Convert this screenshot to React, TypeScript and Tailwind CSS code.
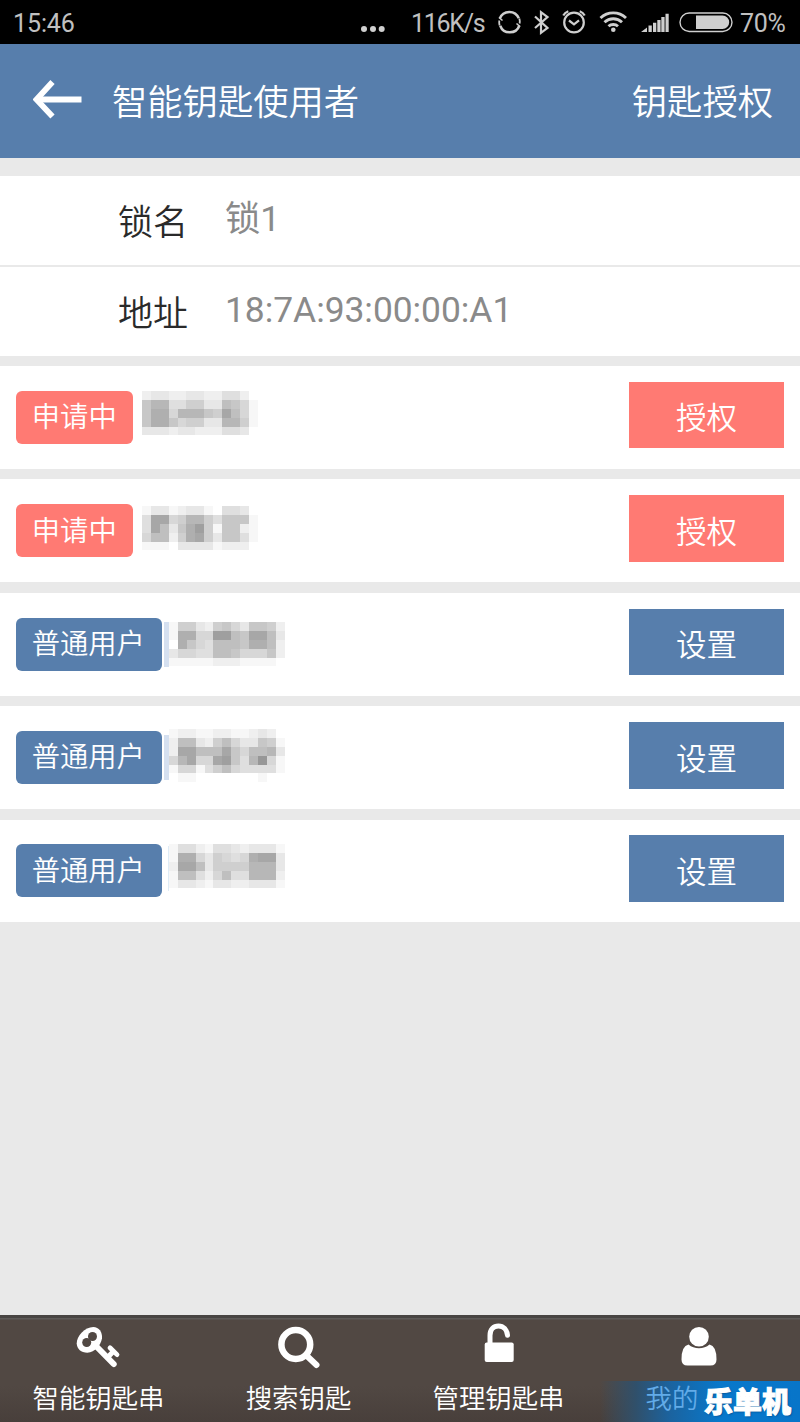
import type { ReactNode } from 'react';
import clsx from 'clsx';

/**
 * Key-user list of a smart lock: lock details on top, then everyone who holds
 * or has requested a key, with the action the owner can take on each.
 */

type Role = 'pending' | 'member';

interface KeyUser {
  role: Role;
  /** Masked name: one string per row of blocks, base-36 darkness per block. */
  mask: string[];
  top: number;
  edge?: 'wide' | 'thin';
}

const ROLE_LABEL: Record<Role, string> = { pending: '申请中', member: '普通用户' };
const ACTION_LABEL: Record<Role, string> = { pending: '授权', member: '设置' };
const TONE: Record<Role, string> = { pending: 'bg-[#ff7a73]', member: 'bg-[#577eac]' };

const USERS: KeyUser[] = [
  {
    role: 'pending',
    top: 24.8,
    mask: ['2332233224420', '7994466338751', '7aa599976b851', '7aa7566339961', '3332332224430'],
  },
  {
    role: 'pending',
    top: 27,
    mask: ['1331233104430', '4bb5699647771', '4b837ac617721', '58826ab637741', '1110333312220'],
  },
  {
    role: 'member',
    top: 29.2,
    edge: 'wide',
    mask: ['1663267537762', '1aa55cc87bb83', '0a7548887aa82', '3554488755572', '1111122211110'],
  },
  {
    role: 'member',
    top: 22.5,
    edge: 'wide',
    mask: ['1221122112320', '2883268533761', '2bb888b758893', '59b55bc749d51', '1551468544441', '0110000000100'],
  },
  {
    role: 'member',
    top: 24.6,
    edge: 'thin',
    mask: ['1442144323331', '1aa536545abb3', '2bb8366669993', '1884258449992', '1332133223331'],
  },
];

const CELL = 8.889;

function MaskedName({ rows }: { rows: string[] }) {
  return (
    <svg width={CELL * 13} height={CELL * rows.length} shapeRendering="crispEdges" className="block">
      {rows.map((row, y) =>
        row.split('').map((c, x) => {
          const v = 255 - parseInt(c, 36) * 8;
          return (
            <rect
              key={`${x}-${y}`}
              x={x * CELL}
              y={y * CELL}
              width={CELL}
              height={CELL}
              fill={`rgb(${v},${v},${v})`}
            />
          );
        }),
      )}
    </svg>
  );
}

function StatusBar() {
  return (
    <div className="flex h-[44px] shrink-0 items-center bg-black pt-[2px] text-[25px] leading-none text-[#c0c0c0]">
      <span className="ml-[13px] w-[346px] tracking-[-0.1px]">15:46</span>
      <svg width="28" height="44" fill="#d0d0d0" className="-mt-[2px]">
        <circle cx="5" cy="29" r="3" />
        <circle cx="14" cy="29" r="3" />
        <circle cx="22.7" cy="29" r="3" />
      </svg>
      <span className="ml-[24px] w-[86px] tracking-[-1.3px]">116K/s</span>
      <svg width="236" height="44" viewBox="497 0 236 44" fill="none" stroke="#cfcfcf" strokeWidth="2.2" className="-mt-[2px] shrink-0">
        {/* sync */}
        <path d="M499.800 18.500A10.200 10.200 0 0 1 518.800 18.300M519.400 25.500A10.200 10.200 0 0 1 500.200 25.700" strokeWidth="2.500" />
        <path d="M519.300 18.500q.8 2.500.3 5M499.700 25.500q-.8-2.500-.3-5" strokeWidth="1.800" />
        <path d="M516.500 23.500l3.500 3M502.500 20.500l-3.500-3" strokeWidth="1.600" />
        {/* bluetooth */}
        <path d="M535 16.500l12.500 11.500-6.500 4.800V12.200l6.500 4.800L535 28" strokeWidth="2.200" />
        {/* alarm */}
        <circle cx="574" cy="22.500" r="9.800" />
        <path d="M569 20.500l5 3.800 5-4" />
        <path d="M563.300 15.500q1.500-3 5-4.300M584.700 15.500q-1.500-3-5-4.300" />
        {/* wifi */}
        <path d="M600.500 18a18.500 18.500 0 0 1 25.500 0M604.500 22.300a12.700 12.700 0 0 1 17.500 0M608.500 26.300a7 7 0 0 1 9.500 0" strokeWidth="2.900" />
        <circle cx="613.300" cy="29.800" r="2.300" fill="#cfcfcf" stroke="none" />
        {/* signal */}
        <path
          d="M641 32l6-4.500V32zM648.500 25.500h3.300V32h-3.300zM653 22.700h3.300V32H653zM657.300 20h3.300v12h-3.300zM661.300 17h3.300v15h-3.300zM665.500 13.800h3.200V32h-3.200z"
          fill="#cfcfcf"
          stroke="none"
        />
        {/* battery */}
        <rect x="680" y="13" width="52" height="18.500" rx="9.200" strokeWidth="1.400" />
        <path d="M696 15.500h26.500a6.700 6.700 0 0 1 0 13.400H696z" fill="#cfcfcf" stroke="none" />
      </svg>
      <span className="ml-[7px] tracking-[-0.3px]">70%</span>
    </div>
  );
}

function Header() {
  return (
    <header className="flex h-[113.500px] shrink-0 items-center bg-[#577eac] pr-[27px] text-[35.300px] leading-none font-[350] text-white">
      <svg width="50" height="42" viewBox="0 0 50 42" fill="none" stroke="#fff" className="-mt-[2px] ml-[33px]">
        <path d="M3 20.500h45.500" strokeWidth="6" />
        <path d="M19.500 3L3.500 20.500l16 17" strokeWidth="5.800" />
      </svg>
      <h1 className="ml-[29px] flex-1 pt-[6px]">智能钥匙使用者</h1>
      <button type="button" className="pt-[6px] leading-none">
        钥匙授权
      </button>
    </header>
  );
}

function InfoRow({ label, value }: { label: string; value: string }) {
  return (
    <div className="flex h-[89px] items-center bg-white pt-[6px] pl-[118px] text-[35px] leading-none">
      <span className="w-[107px] font-[350] text-[#2a2a2a]">{label}</span>
      <span className="-mt-[7px] text-[35.400px] font-normal tracking-[-0.040px] text-[#8a8a8a]">{value}</span>
    </div>
  );
}

function UserRow({ user }: { user: KeyUser }) {
  const { role, edge } = user;
  return (
    <li className="flex h-[102.800px] items-start bg-white pr-[15.700px] pl-[15.500px]">
      <span
        className={clsx(
          'mt-[24.800px] flex h-[53px] items-center justify-center rounded-[6px] pt-[2px] text-[28.300px] leading-none font-[350] text-white',
          role === 'pending' ? 'w-[117.500px]' : 'w-[146.500px] pr-[1px]',
          TONE[role],
        )}
      >
        {ROLE_LABEL[role]}
      </span>
      <span
        className={clsx(
          'h-[45px]',
          !edge && 'w-[9.200px]',
          edge === 'wide' && 'mt-[29px] ml-[2px] w-[5px] bg-[#d5e0f0]',
          edge === 'thin' && 'mt-[26px] ml-[6px] w-px bg-[#dfecf6]',
        )}
      />
      <div style={{ marginTop: user.top }}>
        <MaskedName rows={user.mask} />
      </div>
      <button
        type="button"
        className={clsx(
          'mt-[15.800px] ml-auto flex h-[66.500px] w-[155.500px] items-center justify-center pt-[9px] text-[30.500px] leading-none font-[350] text-white',
          TONE[role],
        )}
      >
        {ACTION_LABEL[role]}
      </button>
    </li>
  );
}

function KeyIcon() {
  return (
    <svg width="46" height="46" viewBox="0 0 46 46" fill="none" stroke="#fff" className="overflow-visible">
      <path
        d="M-.3 18.500C-.5 11 8 2 16.300 2C22 2 25.500 7 25 13.300C24 20 18 27.700 10.300 27.700C4 27.700 0 24-.3 18.500Z"
        fill="#fff"
        stroke="none"
      />
      <g fill="#514843" stroke="none">
        <circle cx="15.500" cy="11.500" r="4.500" />
        <circle cx="9.700" cy="17.500" r="4.500" />
      </g>
      <path d="M18.500 20.500L36.700 39" strokeWidth="6" strokeLinecap="round" />
      <path d="M30.500 32.500l5.800-6" strokeWidth="5" />
      <path d="M33 22.800l7 6.800" strokeWidth="4.800" strokeLinecap="round" />
    </svg>
  );
}

function SearchIcon() {
  return (
    <svg width="46" height="46" viewBox="1 0 46 46" fill="none" stroke="#fff">
      <circle cx="19.800" cy="19.500" r="14.400" strokeWidth="6.500" />
      <path d="M31 31l9.500 9" strokeWidth="6" strokeLinecap="round" />
    </svg>
  );
}

function UnlockIcon() {
  return (
    <svg width="46" height="46" viewBox="1 1 46 46" fill="none" stroke="#fff" className="overflow-visible">
      <path d="M14 20V11.500C14 5.500 17.500 2 22.500 2S31 5.800 31.500 11.200" strokeWidth="5" strokeLinecap="round" />
      <rect x="8.700" y="18.500" width="29" height="19.500" rx="2" fill="#fff" stroke="none" />
    </svg>
  );
}

function PersonIcon() {
  return (
    <svg width="46" height="46" viewBox="1 0 46 46" fill="#fff">
      <circle cx="23" cy="11.700" r="9.800" />
      <path d="M12.500 19.500Q17 23.300 23 23.300T33.500 19.500Q40.500 21 40.500 34.500Q40.500 40.500 34.500 40.500H11.500Q5.500 40.500 5.500 34.500Q5.500 21 12.500 19.500Z" />
    </svg>
  );
}

function Tab({ label, children, dim }: { label: string; children: ReactNode; dim?: boolean }) {
  return (
    <div className="flex w-[200px] flex-col items-center pt-[7px]">
      {children}
      <span
        className={clsx(
          'mt-[14.500px] mr-[3px] text-[26.400px] leading-none font-[350]',
          dim ? 'relative z-20 w-[106px] text-[#62abe8]' : 'text-white',
        )}
      >
        {label}
      </span>
    </div>
  );
}

function TabBar() {
  return (
    <nav className="relative flex h-[107px] shrink-0 border-t-[3px] border-[#484543] bg-[linear-gradient(#5e5b59_0_1px,#514843_2px,#514843_65%,#483f3b_100%)]">
      <Tab label="智能钥匙串">
        <KeyIcon />
      </Tab>
      <Tab label="搜索钥匙">
        <SearchIcon />
      </Tab>
      <Tab label="管理钥匙串">
        <UnlockIcon />
      </Tab>
      <Tab label="我的" dim>
        <PersonIcon />
      </Tab>
      <div className="absolute right-0 bottom-0 z-10 h-[41px] w-[200px] bg-[linear-gradient(90deg,transparent_0%,#30506b_18%,#1b639f_35%,#0878cb_60%,#0875c9_100%)]" />
      <span className="absolute right-[9px] bottom-[4px] z-30 text-[29px] leading-none font-black text-white [-webkit-text-stroke:1px_white] [text-shadow:1px_1px_2px_#034c8c]">
        乐单机
      </span>
    </nav>
  );
}

export default function App() {
  return (
    <div className="flex h-[1422px] w-[800px] flex-col overflow-hidden bg-[#e9e9e9] font-[Roboto,'Noto_Sans_CJK_SC',sans-serif]">
      <StatusBar />
      <Header />
      <main className="flex-1 pt-[18.200px]">
        <section className="mb-[10.400px] space-y-[2px]">
          <InfoRow label="锁名" value="锁1" />
          <InfoRow label="地址" value="18:7A:93:00:00:A1" />
        </section>
        <ul className="space-y-[10.600px]">
          {USERS.map((user, i) => (
            <UserRow key={i} user={user} />
          ))}
        </ul>
      </main>
      <TabBar />
    </div>
  );
}
